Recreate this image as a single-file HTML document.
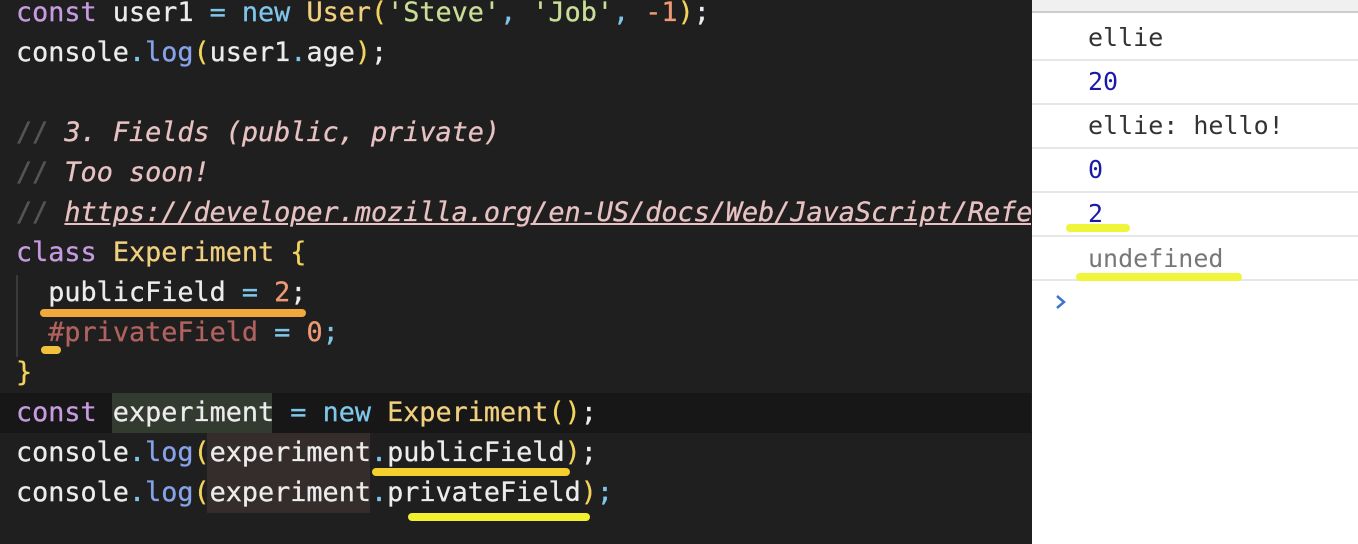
<!DOCTYPE html>
<html><head><style>
body{margin:0;width:1358px;height:544px;overflow:hidden;background:#1f1f1f;position:relative;font-family:"DejaVu Sans Mono","Liberation Mono",monospace}
.ed{position:absolute;left:0;top:0;width:1031px;height:544px;background:#1f1f1f;overflow:hidden}
.l{position:absolute;left:16px;font-size:26.8px;line-height:40px;height:40px;white-space:pre;color:#ececec;-webkit-text-stroke:0.3px}
.k{color:#c79be0}.n{color:#7fc6ea}.c{color:#f0cf7e}.s{color:#c9dd96}.o{color:#ef9a74}.f{color:#86a2e8}.p{color:#f2d35c}
.cm{color:#e8c2c2;font-style:italic}.sl{color:#555}.pv{color:#b0625f}
.con{position:absolute;left:1032px;top:0;width:326px;height:544px;background:#fff}
.r{position:absolute;left:56px;font-size:25px;line-height:44px;height:44px;color:#333;font-family:"DejaVu Sans Mono",monospace}
.sep{position:absolute;left:0;width:326px;height:2px;background:#e6e6e6}
.hl{position:absolute;border-radius:4px}
</style></head><body>
<div class="ed">
<div style="position:absolute;left:0;top:393px;width:1031px;height:40px;background:#171717"></div>
<div style="position:absolute;left:112px;top:393px;width:160px;height:40px;background:#333b30"></div>
<div style="position:absolute;left:207px;top:433px;width:163px;height:80px;background:#352c2c"></div>
<div style="position:absolute;left:16px;top:275px;width:2px;height:82px;background:#3a3a3a"></div>
<div class="l" style="top:-7px"><span class="k">const</span> user1 <span class="n">=</span> <span class="n">new</span> <span class="c">User</span><span class="p">(</span><span class="s">'Steve'</span><span class="n">,</span> <span class="s">'Job'</span><span class="n">,</span> <span class="o">-1</span><span class="p">)</span>;</div>
<div class="l" style="top:33px">console<span class="n">.</span><span class="f">log</span><span class="p">(</span>user1<span class="n">.</span>age<span class="p">)</span>;</div>
<div class="l" style="top:113px"><span class="sl">//</span> <span class="cm">3. Fields (public, private)</span></div>
<div class="l" style="top:153px"><span class="sl">//</span> <span class="cm">Too soon!</span></div>
<div class="l" style="top:193px"><span class="sl">//</span> <span class="cm" style="text-decoration:underline">https://developer.mozilla.org/en-US/docs/Web/JavaScript/Reference</span></div>
<div class="l" style="top:233px"><span class="k">class</span> <span class="c">Experiment</span> <span class="p">{</span></div>
<div class="l" style="top:273px">  publicField <span class="n">=</span> <span class="o">2</span>;</div>
<div class="l" style="top:313px">  <span class="pv">#privateField</span> <span class="n">=</span> <span class="o">0</span><span class="n">;</span></div>
<div class="l" style="top:353px"><span class="p">}</span></div>
<div class="l" style="top:393px"><span class="k">const</span> experiment <span class="n">=</span> <span class="n">new</span> <span class="c">Experiment</span><span class="p">()</span>;</div>
<div class="l" style="top:433px">console<span class="n">.</span><span class="f">log</span><span class="p">(</span>experiment<span class="n">.</span>publicField<span class="p">)</span>;</div>
<div class="l" style="top:473px">console<span class="n">.</span><span class="f">log</span><span class="p">(</span>experiment<span class="n">.</span>privateField<span class="p">)</span><span class="n">;</span></div>
<div class="hl" style="left:40px;top:309px;width:266px;height:8px;background:#f2a93b"></div>
<div class="hl" style="left:41px;top:346px;width:20px;height:8px;background:#f2c03b"></div>
<div class="hl" style="left:372px;top:468px;width:198px;height:8px;background:#f5cf2e"></div>
<div class="hl" style="left:408px;top:513px;width:182px;height:8px;background:#f3f02e"></div>
</div>
<div class="con">
<div style="position:absolute;left:0;top:0;width:326px;height:11px;background:#f0f0f0"></div>
<div class="sep" style="top:11px;background:#ccc"></div>
<div class="r" style="top:16px">ellie</div>
<div class="sep" style="top:59px"></div>
<div class="r" style="top:60px;color:#1a1aa6">20</div>
<div class="sep" style="top:103px"></div>
<div class="r" style="top:104px">ellie: hello!</div>
<div class="sep" style="top:147px"></div>
<div class="r" style="top:148px;color:#1a1aa6">0</div>
<div class="sep" style="top:191px"></div>
<div class="r" style="top:192px;color:#1a1aa6">2</div>
<div class="sep" style="top:235px"></div>
<div class="r" style="top:237px;color:#777">undefined</div>
<div class="sep" style="top:279px"></div>
<div class="hl" style="left:34px;top:224px;width:64px;height:8px;background:#eef53a"></div>
<div class="hl" style="left:44px;top:273px;width:166px;height:8px;background:#eef53a"></div>
<svg style="position:absolute;left:22px;top:293px" width="14" height="18" viewBox="0 0 14 18"><path d="M3 3 L10 9 L3 15" fill="none" stroke="#3b73d6" stroke-width="2.5"/></svg>
</div>
</body></html>
